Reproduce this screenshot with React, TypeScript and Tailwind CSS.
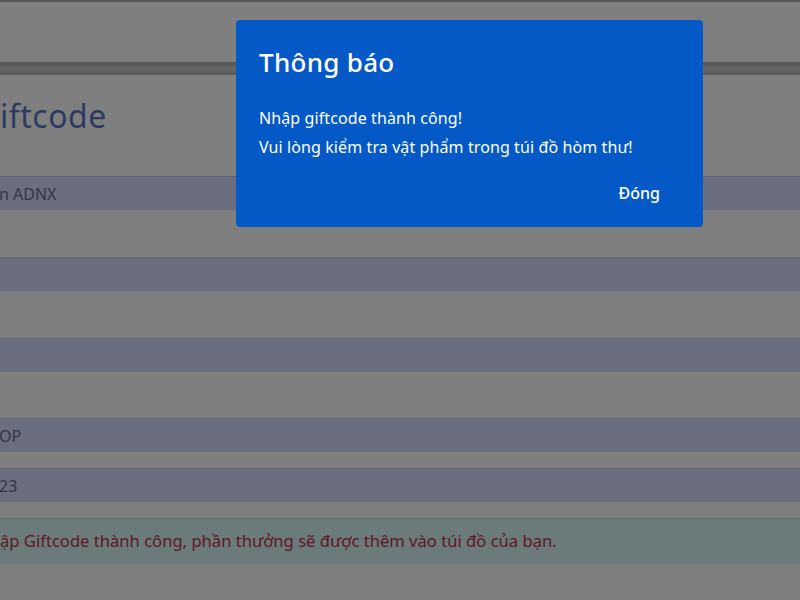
import React from "react";

const font = { fontFamily: '"Noto Sans", "Open Sans", sans-serif' };

function Row({ top, text }: { top: number; text?: string }) {
  return (
    <div
      className="h-[34px] bg-[#d4dcff] border-t border-[#c2c8e6] flex items-center text-[16px] text-[#686d85]"
      style={{ marginTop: top }}
    >
      {text ? <span className="-ml-[1px]">{text}</span> : null}
    </div>
  );
}

export default function App() {
  return (
    <div className="relative w-[800px] h-[600px] overflow-hidden bg-white" style={font}>
      {/* underlying page */}
      <div className="flex flex-col">
        <div className="h-[2px] bg-[#aaaaaa]" />
        <div className="h-[60px] bg-[#fefefe]" />
        <div className="h-[13px] bg-gradient-to-b from-[#a8a8a8] via-[#cfcfcf] to-[#b4b4b4]" />
        <div className="pt-[23px] h-[101px]">
          <h1 className="text-[32px] leading-[36px] text-[#5a76c4] tracking-[0.5px]">iftcode</h1>
        </div>
        <Row top={0} text="n ADNX" />
        <Row top={47} />
        <Row top={47} />
        <Row top={46} text="OP" />
        <Row top={16} text="23" />
        <div className="mt-[16px] h-[46px] bg-[#d6f4f4] border-t border-[#c4e2e2] flex items-center text-[16.6px] text-[#c03248]">
          <span>ập Giftcode thành công, phần thưởng sẽ được thêm vào túi đồ của bạn.</span>
        </div>
      </div>

      {/* overlay */}
      <div className="absolute inset-0 bg-black/50" />

      {/* modal */}
      <div className="absolute left-[236px] top-[20px] w-[467px] h-[207px] rounded-[4px] bg-[#0459c6] text-white flex flex-col pl-[23px] pr-[43px]">
        <div className="pt-[26px] text-[26px] leading-[32px] font-medium tracking-[0.3px]">Thông báo</div>
        <div className="mt-[30px] text-[16px] leading-[20px] flex flex-col gap-[9px] tracking-[0.1px]">
          <p>Nhập giftcode thành công!</p>
          <p>Vui lòng kiểm tra vật phẩm trong túi đồ hòm thư!</p>
        </div>
        <div className="mt-[26px] flex justify-end text-[16px] leading-[20px] font-medium">Đóng</div>
      </div>
    </div>
  );
}
